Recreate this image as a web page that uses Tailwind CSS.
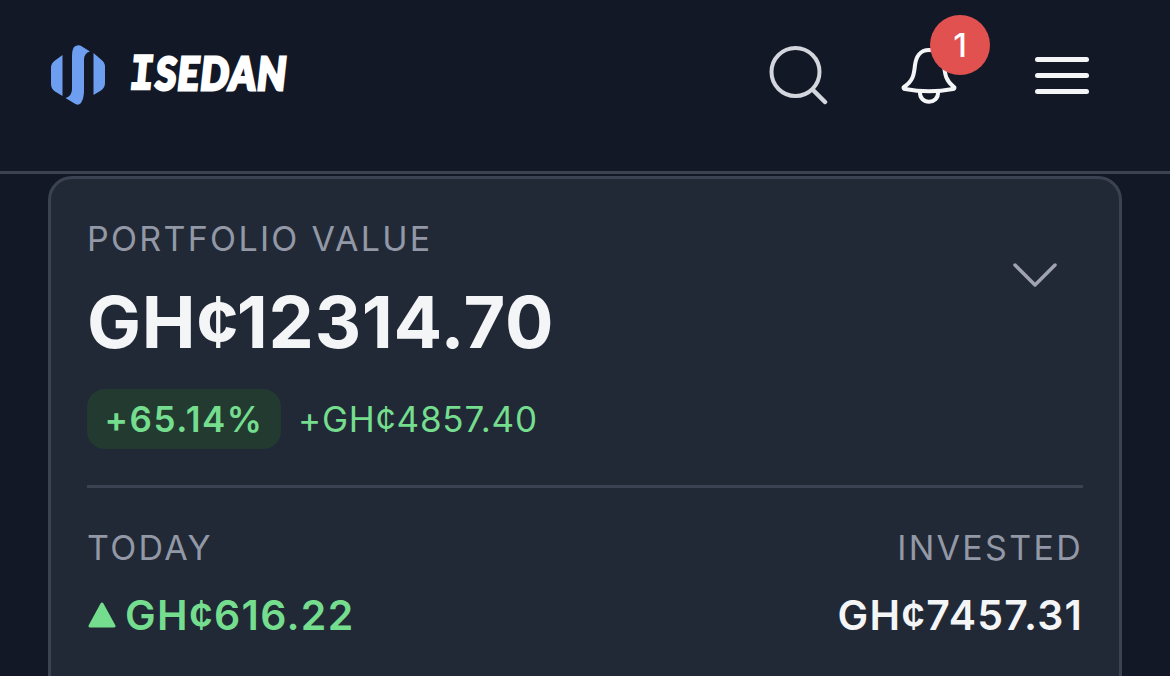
<!doctype html>
<html><head><meta charset="utf-8"><script src="https://cdn.jsdelivr.net/npm/@tailwindcss/browser@4"></script></head>
<body class="m-0 bg-[#111726]">
<div class="w-[1170px] h-[676px] overflow-hidden bg-[#121826] font-['Inter','Liberation_Sans',sans-serif]">
  <header class="h-[174px] border-b-[3px] border-[#3b4252] flex items-start justify-between pl-[50px] pr-[81px] pt-[44px]">
    <div class="flex items-center gap-[24px] h-[60px]">
      <svg width="56" height="62" viewBox="0 0 56 62" class="shrink-0 self-start">
        <path fill="#6d9eef" d="M12.500 11V52L5 47.500Q1 45 1 40V24Q1 19 5 16.500Z"/>
        <path fill="#6d9eef" d="M43.500 9V51L51 46.500Q55 44 55 39V23Q55 18 51 15.500Z"/>
        <path fill="#6d9eef" d="M24 3Q28 0 32 2.500L40 7.500Q34 9 34 16V47Q34 54 31 59Q28 62 24.500 59.500L15.500 54Q22 52 22 45V12Q22 6 24 3Z"/>
      </svg>
      <span class="flex items-center -mt-[2px] text-[46px] leading-none text-white font-black italic [-webkit-text-stroke:3px_white] font-['Lato',sans-serif] tracking-[1.5px] scale-x-[0.875] origin-left"><span class="font-['DejaVu_Sans_Mono',monospace] font-bold not-italic -skew-x-6 [-webkit-text-stroke:2.5px_white] w-[29px] tracking-normal">I</span>SEDAN</span>
    </div>
    <div class="flex items-start">
      <svg width="62" height="62" viewBox="0 0 62 62" class="mt-[1px] mr-[73px]" fill="none" stroke="#d3d6dc" stroke-linecap="round">
        <circle cx="29.500" cy="27" r="24" stroke-width="4"/>
        <path d="M47 45L59 57" stroke-width="4.500"/>
      </svg>
      <div class="relative w-[60px] h-[62px] mr-[74px]">
        <svg width="60" height="62" viewBox="0 0 60 62" class="absolute left-0 top-[1px]" fill="none" stroke="#f4f5f7" stroke-width="4" stroke-linejoin="round" stroke-linecap="round">
          <path d="M28 5C19 5 15 12 14 20C13 30 12 36 3 42C2 43 3 44 4 44C20 47 36 47 52 44C53 44 54 43 53 42C45 36 44 30 43 20C42 12 37 5 28 5Z"/>
          <path d="M19 47C18 60 38 60 37 47"/>
        </svg>
        <div class="absolute left-[29px] -top-[29px] w-[60px] h-[60px] rounded-full bg-[#e0514f] flex items-center justify-center text-white text-[33px] font-medium leading-none">1</div>
      </div>
      <div class="flex flex-col gap-[11px] w-[54px] mt-[13px]">
        <div class="h-[5px] rounded-full bg-[#f4f5f7]"></div>
        <div class="h-[5px] rounded-full bg-[#f4f5f7]"></div>
        <div class="h-[5px] rounded-full bg-[#f4f5f7]"></div>
      </div>
    </div>
  </header>
  <main class="mt-[2px] ml-[48px] w-[1074px] h-[540px] rounded-[24px] border-[3px] border-[#3b4252] bg-[#222936] pl-[36px] pr-[37px] pt-[40px]">
    <div class="relative">
      <div class="text-[34px] leading-[40px] text-[#9298a6] tracking-[2.3px]">PORTFOLIO VALUE</div>
      <svg width="44" height="26" viewBox="0 0 44 26" class="absolute right-[25px] top-[43px]" fill="none" stroke="#9fa4b0" stroke-width="3.500" stroke-linecap="round" stroke-linejoin="round"><path d="M2 3L22 23L42 3"/></svg>
      <div class="mt-[21px] text-[72px] leading-[84px] font-bold text-[#f4f5f7] tracking-[0.7px]">GH¢12314.70</div>
      <div class="mt-[25px] flex items-center gap-[18px]">
        <div class="h-[60px] w-[194px] rounded-[18px] bg-[#233a31] text-[#74dd8e] text-[35px] tracking-[1.5px] font-semibold flex items-center justify-center">+65.14%</div>
        <div class="text-[#74dd8e] text-[35px] tracking-[0.8px] -ml-[1px]">+GH¢4857.40</div>
      </div>
      <div class="mt-[36px] h-[3px] bg-[#3b4252] w-[996px]"></div>
      <div class="mt-[40px] w-[996px] flex justify-between">
        <div>
          <div class="text-[34px] leading-[40px] text-[#9298a6] tracking-[2.3px]">TODAY</div>
          <div class="mt-[24px] ml-[1px] flex items-center gap-[9px] text-[#74dd8e] text-[41px] tracking-[1.3px] leading-[46px] font-semibold">
            <svg width="28" height="28" viewBox="0 0 28 28" fill="#74dd8e" stroke="#74dd8e" stroke-width="3" stroke-linejoin="round"><path d="M14 3L26 25H2Z"/></svg>
            <span>GH¢616.22</span>
          </div>
        </div>
        <div class="text-right">
          <div class="text-[34px] leading-[40px] text-[#9298a6] tracking-[2.3px]">INVESTED</div>
          <div class="mt-[24px] text-[#f4f5f7] text-[41px] tracking-[1.2px] leading-[46px] font-semibold">GH¢7457.31</div>
        </div>
      </div>
    </div>
  </main>
</div>
</body></html>
